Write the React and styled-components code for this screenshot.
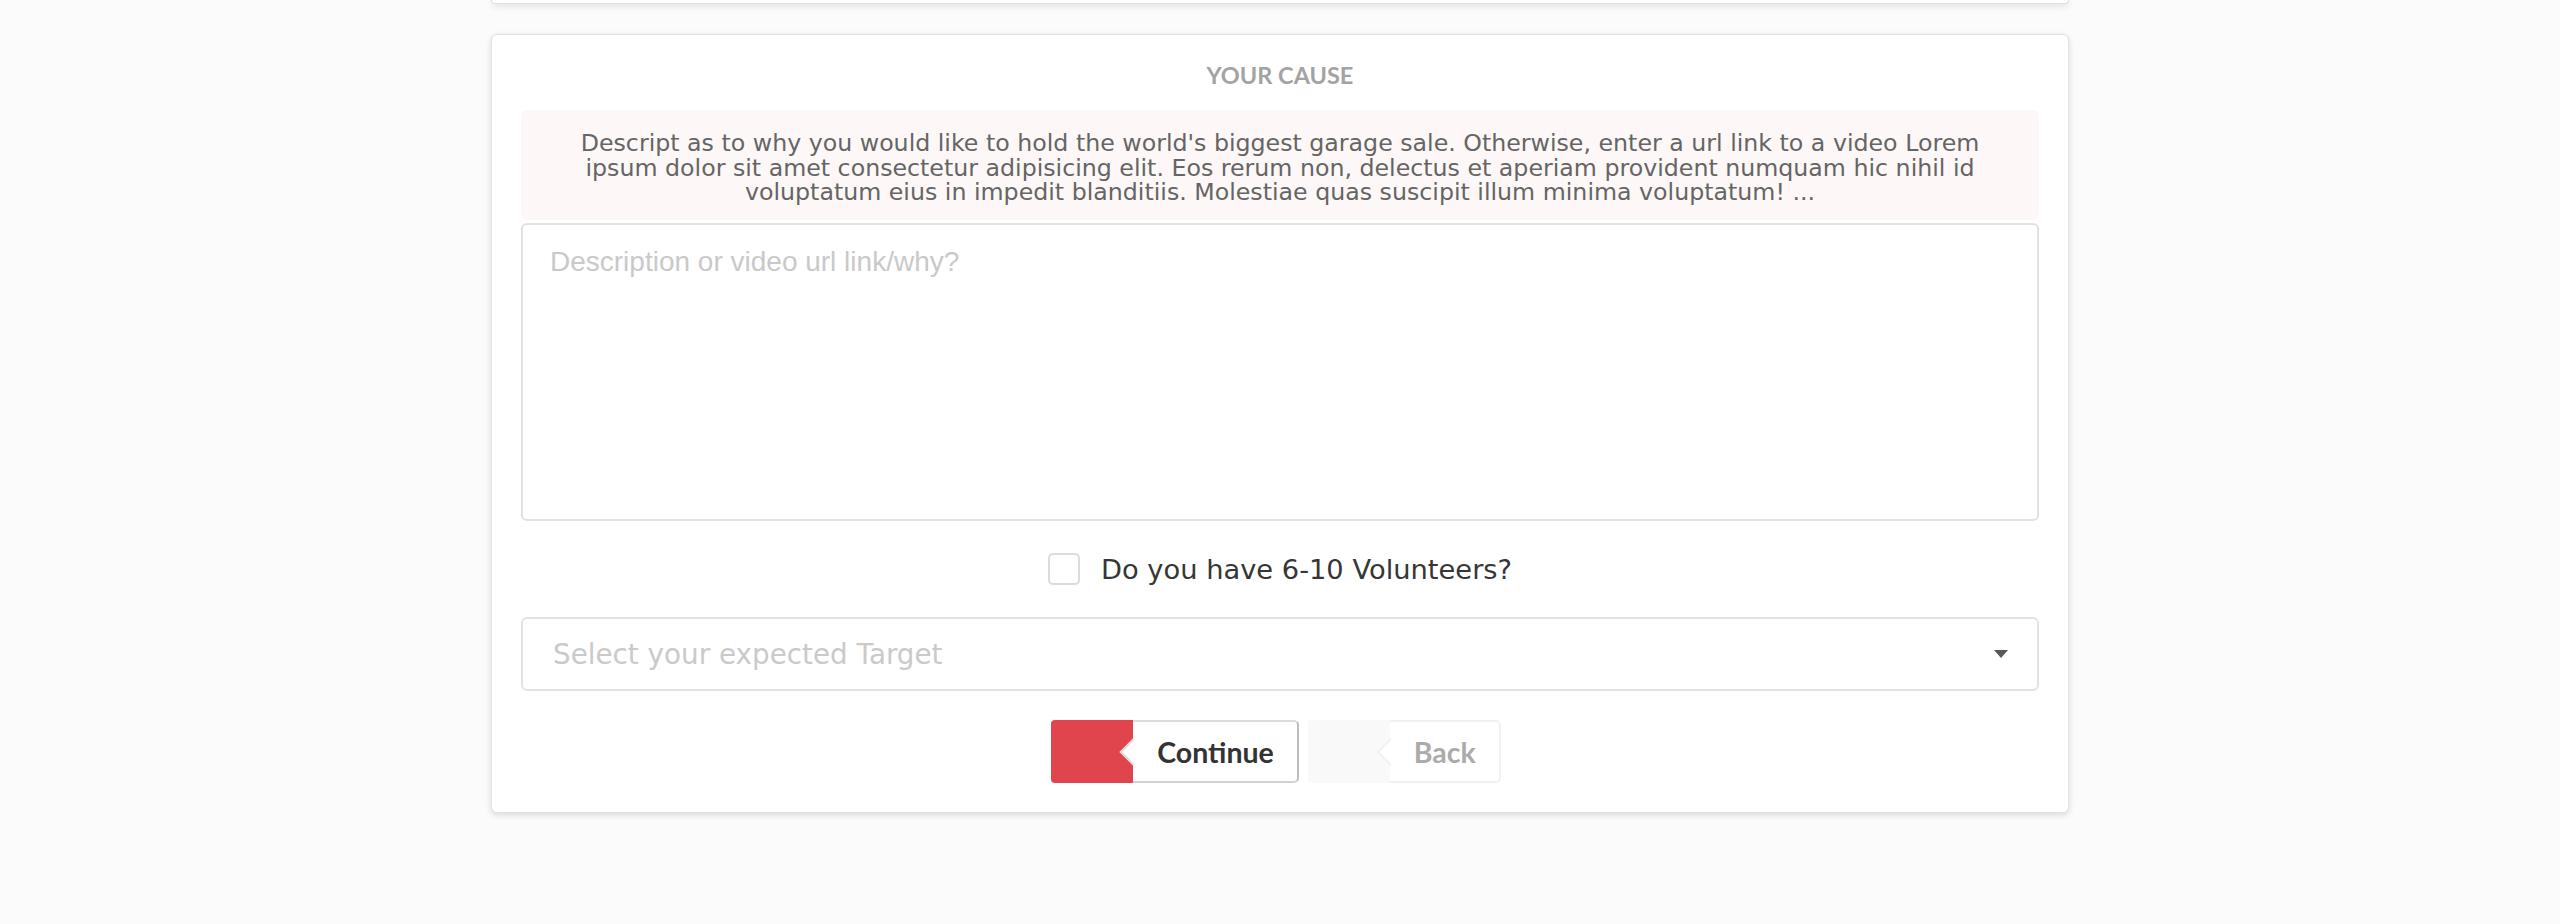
import React from "react";
import styled, { createGlobalStyle } from "styled-components";

const GlobalStyle = createGlobalStyle`
  html, body {
    margin: 0;
    padding: 0;
    background: #fbfbfb;
  }
  * {
    box-sizing: border-box;
  }
`;

const Page = styled.div`
  width: 100%;
  min-height: 924px;
  background: #fbfbfb;
`;

const Card = styled.div`
  width: 1578px;
  margin: 0 auto;
  background: #fff;
  border: 1px solid #e1e1e1;
  border-radius: 6px;
  box-shadow: 0 2px 6px rgba(0, 0, 0, 0.14);
`;

const PrevCard = styled(Card)`
  height: 4px;
  border-top: none;
  border-radius: 0 0 6px 6px;
  margin-bottom: 30px;
`;

const CauseCard = styled(Card)`
  padding: 25px 29px 29px;
`;

const Title = styled.h4`
  margin: 0 0 20px;
  font-family: Lato, "Liberation Sans", sans-serif;
  font-weight: 700;
  font-size: 23.5px;
  line-height: 30px;
  color: #a3a3a3;
  text-align: center;
`;

const Notice = styled.p`
  margin: 0 0 3px;
  height: 110px;
  padding: 21px 10px 14px;
  background: #fdf8f7;
  border-radius: 6px;
  font-family: "DejaVu Sans", sans-serif;
  font-size: 23.7px;
  line-height: 24.5px;
  color: #656565;
  text-align: center;
`;

const TextArea = styled.textarea`
  display: block;
  width: 100%;
  height: 298px;
  padding: 21px 27px;
  border: 2px solid #e2e2e2;
  border-radius: 6px;
  resize: none;
  font-family: "Liberation Sans", Arial, sans-serif;
  font-size: 28px;
  color: #333;
  outline: none;
  &::placeholder {
    color: #c9c9c9;
  }
`;

const CheckRow = styled.label`
  display: flex;
  align-items: center;
  justify-content: center;
  gap: 21px;
  margin-top: 32px;
  height: 32px;
`;

const Box = styled.span`
  width: 32px;
  height: 32px;
  border: 2px solid #dcdcdc;
  border-radius: 5px;
  background: #fff;
`;

const CheckText = styled.span`
  font-family: "DejaVu Sans", sans-serif;
  font-size: 27.3px;
  color: #363636;
`;

const Select = styled.div`
  display: flex;
  align-items: center;
  justify-content: space-between;
  margin-top: 32px;
  height: 74px;
  padding: 0 29px 0 30px;
  border: 2px solid #e2e2e2;
  border-radius: 6px;
  font-family: "DejaVu Sans", sans-serif;
  font-size: 27.8px;
  color: #cacaca;
`;

const Caret = styled.span`
  width: 0;
  height: 0;
  border-left: 7px solid transparent;
  border-right: 7px solid transparent;
  border-top: 8px solid #585858;
`;

const Actions = styled.div`
  display: flex;
  justify-content: center;
  gap: 9px;
  margin-top: 29px;
  padding-right: 8px;
`;

const LabeledButton = styled.div`
  display: flex;
  height: 63px;
`;

const IconSide = styled.div`
  width: 82px;
  border-radius: 4px 0 0 4px;
  background: ${(p) => (p.$primary ? "#e0454d" : "#f9f9f9")};
`;

const Tag = styled.div`
  position: relative;
  display: flex;
  align-items: center;
  padding: 0 23px 0 24px;
  background: #fff;
  border: 2px solid ${(p) => (p.$faded ? "#f1f1f1" : "#dcdcdc")};
  border-right-color: ${(p) => (p.$faded ? "#f1f1f1" : "#bdbdbd")};
  border-bottom-color: ${(p) => (p.$faded ? "#f1f1f1" : "#d2d2d2")};
  border-left: none;
  border-radius: 0 5px 5px 0;
  font-family: Lato, "Liberation Sans", sans-serif;
  font-weight: 700;
  font-size: 28.5px;
  color: ${(p) => (p.$faded ? "#ababab" : "#333")};

  &::before {
    content: "";
    position: absolute;
    left: 0;
    top: 50%;
    width: 17px;
    height: 17px;
    background: #fff;
    border-left: 2px solid ${(p) => (p.$faded ? "#f1f1f1" : "#dcdcdc")};
    border-bottom: 2px solid ${(p) => (p.$faded ? "#f1f1f1" : "#dcdcdc")};
    transform: translate(-50%, -50%) rotate(45deg);
  }
`;

export default function App() {
  return (
    <Page>
      <GlobalStyle />
      <PrevCard />
      <CauseCard>
        <Title>YOUR CAUSE</Title>
        <Notice>
          Descript as to why you would like to hold the world's biggest garage sale. Otherwise, enter a url link to a video Lorem
          <br />
          ipsum dolor sit amet consectetur adipisicing elit. Eos rerum non, delectus et aperiam provident numquam hic nihil id
          <br />
          voluptatum eius in impedit blanditiis. Molestiae quas suscipit illum minima voluptatum! ...
        </Notice>
        <TextArea placeholder="Description or video url link/why?" />
        <CheckRow>
          <Box />
          <CheckText>Do you have 6-10 Volunteers?</CheckText>
        </CheckRow>
        <Select>
          <span>Select your expected Target</span>
          <Caret />
        </Select>
        <Actions>
          <LabeledButton>
            <IconSide $primary />
            <Tag>Continue</Tag>
          </LabeledButton>
          <LabeledButton>
            <IconSide />
            <Tag $faded>Back</Tag>
          </LabeledButton>
        </Actions>
      </CauseCard>
    </Page>
  );
}
